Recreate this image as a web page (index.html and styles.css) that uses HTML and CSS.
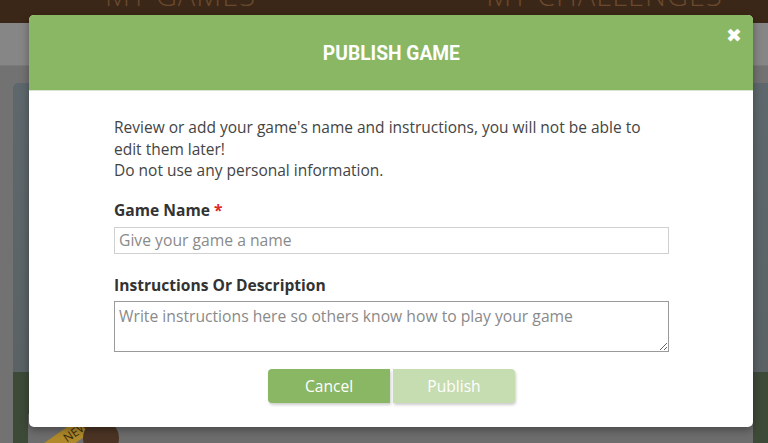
FILE: index.html
```html
<!DOCTYPE html>
<html>
<head>
<meta charset="utf-8">
<link rel="stylesheet" href="styles.css">
</head>
<body>
<div class="page">
  <header class="topbar">
    <span class="tab tab-games">MY GAMES</span>
    <span class="tab tab-challenges">MY CHALLENGES</span>
  </header>
  <div class="subbar"></div>
  <div class="strip"></div>
  <main class="content">
    <div class="card">
      <div class="card-top"></div>
      <div class="card-bottom">
        <div class="tile">
          <div class="ribbon">NEW!</div>
          <div class="avatar"></div>
        </div>
      </div>
    </div>
  </main>
</div>

<div class="modal">
  <div class="modal-head">
    <h1 class="modal-title">PUBLISH GAME</h1>
    <span class="close">&#x2716;</span>
  </div>
  <div class="modal-body">
    <p class="intro">Review or add your game's name and instructions, you will not be able to edit them later!<br>Do not use any personal information.</p>
    <label class="field-label">Game Name <span class="req">*</span></label>
    <input class="text-input" type="text" placeholder="Give your game a name">
    <label class="field-label second">Instructions Or Description</label>
    <textarea class="text-area" placeholder="Write instructions here so others know how to play your game"></textarea>
    <div class="actions">
      <button class="btn btn-cancel">Cancel</button>
      <button class="btn btn-publish">Publish</button>
    </div>
  </div>
</div>
</body>
</html>
```
FILE: styles.css
```css
* { box-sizing: border-box; }
html, body { margin: 0; padding: 0; }
body {
  width: 768px;
  height: 443px;
  overflow: hidden;
  background: #727272;
  font-family: "Open Sans", sans-serif;
  position: relative;
}
.page {
  display: flex;
  flex-direction: column;
  height: 443px;
}
.topbar {
  height: 23px;
  flex: none;
  background: #3b2717;
  display: flex;
  align-items: flex-start;
  overflow: hidden;
  box-shadow: 0 1px 2px rgba(0,0,0,0.4);
}
.tab {
  font-family: "Open Sans", sans-serif;
  font-weight: 300;
  font-size: 29px;
  line-height: 30px;
  color: #6a4a2f;
  letter-spacing: 1px;
  margin-top: -20px;
}
.tab-games { margin-left: 105px; }
.tab-challenges { margin-left: 230px; }
.subbar {
  height: 42px;
  flex: none;
  background: #868686;
}
.strip {
  height: 1px;
  flex: none;
  background: #7b7b7b;
}
.content {
  flex: 1;
  min-height: 0;
  overflow: hidden;
  background: #727272;
  padding: 17px 0 0 13px;
}
.card {
  height: 360px;
  border-radius: 6px 0 0 0;
  overflow: hidden;
  display: flex;
  flex-direction: column;
  background: #5d666a;
}
.card-top { flex: 1; background: linear-gradient(#5e686c, #5a6265); }
.card-bottom {
  height: 71px;
  background: #3e4a38;
  padding: 42px 15px 0 15px;
  display: flex;
}
.tile {
  flex: 1;
  background: #6d6d6d;
  position: relative;
  overflow: hidden;
}
.ribbon {
  position: absolute;
  left: -6px;
  top: 8px;
  width: 110px;
  height: 18px;
  background: #b08a2a;
  color: #3a2a10;
  font-size: 12px;
  text-align: center;
  line-height: 18px;
  transform: rotate(-35deg);
}
.avatar {
  position: absolute;
  left: 55px;
  top: 6px;
  width: 36px;
  height: 36px;
  border-radius: 50%;
  background: #4b3424;
}

.modal {
  position: absolute;
  left: 29px;
  top: 15px;
  width: 724px;
  height: 412px;
  background: #fff;
  border-radius: 5px;
  overflow: hidden;
  box-shadow: 0 3px 8px rgba(0,0,0,0.35);
}
.modal-head {
  height: 76px;
  background: #8ab764;
  border-bottom: 1px solid #d9e4cf;
  position: relative;
  display: flex;
  align-items: center;
  justify-content: center;
}
.modal-title {
  margin: 0;
  font-family: Roboto, sans-serif;
  font-weight: 700;
  font-size: 20px;
  color: #fff;
  transform: scaleX(0.96);
  padding-top: 1px;
}
.close {
  position: absolute;
  right: 11px;
  top: 9px;
  color: #fff;
  font-size: 19px;
  line-height: 22px;
  font-family: "DejaVu Sans", sans-serif;
  font-weight: 700;
}
.modal-body {
  padding: 26px 85px 0 85px;
  display: flex;
  flex-direction: column;
}
.intro {
  margin: 0;
  font-size: 15.5px;
  line-height: 21.5px;
  color: #444;
}
.field-label {
  display: block;
  margin-top: 18px;
  font-size: 15.6px;
  font-weight: 700;
  color: #333;
  line-height: 21px;
}
.field-label.second { margin-top: 21px; }
.req { color: #e0262b; }
.text-input {
  margin-top: 6px;
  width: 555px;
  height: 27px;
  border: 1px solid #d0d0d0;
  padding: 0 4px;
  font-family: "Open Sans", sans-serif;
  font-size: 15.7px;
  color: #444;
  outline: none;
}
.text-input::placeholder, .text-area::placeholder { color: #8a8a8a; }
.text-area {
  margin-top: 5px;
  width: 555px;
  height: 51px;
  border: 1px solid #9a9a9a;
  padding: 4px 4px;
  font-family: "Open Sans", sans-serif;
  font-size: 15.7px;
  line-height: 20px;
  resize: vertical;
  outline: none;
}
.actions {
  display: flex;
  justify-content: center;
  gap: 3px;
  margin-top: 17px;
  padding-left: 1px;
}
.btn {
  width: 122px;
  height: 34px;
  border: none;
  border-radius: 4px;
  font-family: "Open Sans", sans-serif;
  font-size: 15.6px;
  color: #fff;
  box-shadow: 1px 2px 3px rgba(0,0,0,0.2);
}
.btn-cancel { background: #8ab764; border-radius: 4px 0 0 4px; }
.btn-publish { background: #c6dcb1; border-radius: 0 4px 4px 0; }
```
